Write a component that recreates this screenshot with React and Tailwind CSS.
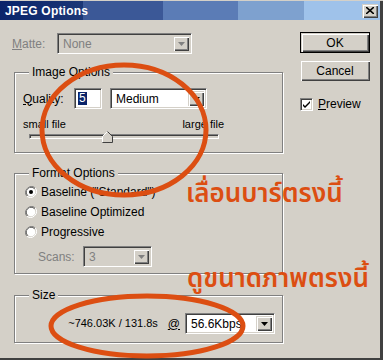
import React from "react";

const font = { fontFamily: '"Liberation Sans", Arial, sans-serif' };
const thai = { fontFamily: '"Noto Sans Thai", "Tahoma", "Loma", "Garuda", "DejaVu Sans", sans-serif' };

const sunken =
  "border border-t-[#808080] border-l-[#808080] border-b-white border-r-white shadow-[inset_1px_1px_0_#404040,inset_-1px_-1px_0_#d4d0c8]";
const raised =
  "bg-[#d4d0c8] shadow-[inset_1px_1px_0_#d4d0c8,inset_2px_2px_0_#fff,inset_-1px_-1px_0_#404040,inset_-2px_-2px_0_#808080]";

const Arrow = ({ disabled }) => (
  <div className={`w-[16px] h-full flex items-center justify-center ${raised}`}>
    <svg width="7" height="4" viewBox="0 0 7 4">
      <path d="M0 0h7L3.5 4z" fill={disabled ? "#808080" : "#000"} />
    </svg>
  </div>
);

const Select = ({ value, width, disabled }) => (
  <div
    className={`flex items-stretch h-[21px] p-[2px] ${sunken} ${disabled ? "bg-[#d4d0c8]" : "bg-white"}`}
    style={{ width }}
  >
    <div className={`flex-1 flex items-center pl-[3px] ${disabled ? "text-[#808080]" : "text-black"}`}>{value}</div>
    <Arrow disabled={disabled} />
  </div>
);

const Group = ({ title, h, children }) => (
  <div className={`relative border border-[#808080] shadow-[inset_1px_1px_0_#fff,1px_1px_0_#fff] ${h}`}>
    <span className="absolute left-[14px] top-[-8px] bg-[#d4d0c8] px-[3px] leading-[14px]">{title}</span>
    {children}
  </div>
);

const Radio = ({ checked, label }) => (
  <div className="flex items-center h-[20px] gap-[4px]">
    <svg width="12" height="12" viewBox="0 0 12 12">
      <path d="M10.2 1.8A6 6 0 0 0 1.8 10.2" stroke="#808080" fill="none" />
      <path d="M9.5 2.5A5 5 0 0 0 2.5 9.5" stroke="#404040" fill="none" />
      <path d="M1.8 10.2A6 6 0 0 0 10.2 1.8" stroke="#fff" fill="none" />
      <circle cx="6" cy="6" r="4.3" fill="#fff" />
      {checked && <circle cx="6" cy="6" r="2" fill="#000" />}
    </svg>
    <span>{label}</span>
  </div>
);

const Button = ({ label, def }) => (
  <div
    className={`w-[70px] h-[21px] flex items-center justify-center text-[12px] ${
      def ? "border border-black" : ""
    } ${raised}`}
  >
    {label}
  </div>
);

export default function App() {
  return (
    <div className="relative w-[383px] h-[360px] bg-[#d4d0c8] text-[12px] text-black overflow-hidden" style={font}>
      <div className="border-r-[3px] border-b-[3px] border-r-[#404040] border-b-[#404040] h-[360px]">
        {/* title bar */}
        <div className="mt-[1px] h-[19px] flex items-center justify-between pl-[5px] pr-[2px] bg-[linear-gradient(90deg,#0a246a_0,#1b3776_83px,#3b5897_83px,#3b5897_163px,#5b7cb6_163px,#5b7cb6_238px,#7ea1cf_238px,#7ea1cf_304px,#9fc2ea_304px)]">
          <span className="text-white font-bold text-[12px] tracking-[0.2px]">JPEG Options</span>
          <div className={`w-[16px] h-[14px] flex items-center justify-center ${raised}`}>
            <svg width="8" height="7" viewBox="0 0 8 7">
              <path d="M0 0L8 7M8 0L0 7" stroke="#000" strokeWidth="1.6" />
            </svg>
          </div>
        </div>

        <div className="flex">
          {/* left column */}
          <div className="w-[283px]">
            <div className="flex items-center mt-[13px] pl-[12px] gap-[12px]">
              <span className="text-[#808080] w-[33px]">
                <u>M</u>atte:
              </span>
              <Select value="None" width={135} disabled />
            </div>

            <div className="ml-[14px] mt-[18px]">
              <Group title="Image Options" h="h-[81px]">
                <div className="flex items-center mt-[15px] pl-[8px]">
                  <span className="w-[51px]">
                    <u>Q</u>uality:
                  </span>
                  <div className={`w-[28px] h-[21px] bg-white flex items-center pl-[3px] ${sunken}`}>
                    <span className="bg-[#0a246a] text-white leading-[13px] px-[1px]">5</span>
                  </div>
                  <div className="ml-[8px]">
                    <Select value="Medium" width={97} />
                  </div>
                </div>
                <div className="flex justify-between pl-[8px] pr-[58px] mt-[9px] text-[11px] leading-[13px]">
                  <span>small file</span>
                  <span>large file</span>
                </div>
                <div className="relative ml-[14px] mt-[3px] w-[190px] h-[5px] bg-[#d4d0c8] border border-t-[#808080] border-l-[#808080] border-b-white border-r-white shadow-[inset_1px_1px_0_#404040]">
                  <svg className="absolute left-[72px] top-[-4px]" width="11" height="12" viewBox="0 0 11 12">
                    <path d="M5.5 0.5L10.5 5.5V11.5H0.5V5.5Z" fill="#d4d0c8" />
                    <path d="M0.5 11V5.5L5.5 0.5" stroke="#fff" fill="none" />
                    <path d="M5.5 0.5L10.5 5.5V11.5H0.5" stroke="#404040" fill="none" />
                  </svg>
                </div>
              </Group>
            </div>

            <div className="ml-[14px] mt-[20px]">
              <Group title="Format Options" h="h-[101px]">
                <div className="pl-[10px] mt-[8px]">
                  <Radio checked label={'Baseline ("Standard")'} />
                  <Radio label="Baseline Optimized" />
                  <Radio label="Progressive" />
                </div>
                <div className="flex items-center mt-[4px] pl-[23px]">
                  <span className="text-[#808080] w-[45px]">Scans:</span>
                  <Select value="3" width={69} disabled />
                </div>
              </Group>
            </div>

            <div className="ml-[14px] mt-[21px]">
              <Group title="Size" h="h-[48px]">
                <div className="flex items-center justify-end mt-[17px] pr-[7px]">
                  <span className="text-[11px]">~746.03K / 131.8s</span>
                  <span className="underline ml-[10px] mr-[5px]">@</span>
                  <Select value="56.6Kbps" width={90} />
                </div>
              </Group>
            </div>
          </div>

          {/* right column */}
          <div className="ml-[17px] mt-[12px] flex flex-col">
            <Button label="OK" def />
            <div className="mt-[7px]">
              <Button label="Cancel" />
            </div>
            <div className="flex items-center mt-[14px] gap-[5px]">
              <div className={`w-[13px] h-[13px] bg-white flex items-center justify-center ${sunken}`}>
                <svg width="7" height="7" viewBox="0 0 7 7">
                  <path d="M0 3l2 2 5-5v2l-5 5-2-2z" fill="#000" />
                </svg>
              </div>
              <span>
                <u>P</u>review
              </span>
            </div>
          </div>
        </div>
      </div>

      {/* annotations */}
      <svg className="absolute left-0 top-0 pointer-events-none" width="383" height="360">
        <ellipse cx="124" cy="130" rx="82" ry="65" fill="none" stroke="#dc4e12" strokeWidth="5" />
        <ellipse cx="147" cy="326" rx="96" ry="30" fill="none" stroke="#dc4e12" strokeWidth="5" />
      </svg>
      <div className="absolute left-[186px] top-[174px] text-[#dc4e12] text-[26px] font-semibold leading-[40px]" style={thai}>
        เลื่อนบาร์ตรงนี้
      </div>
      <div className="absolute left-[187px] top-[259px] text-[#dc4e12] text-[26px] font-semibold leading-[40px]" style={thai}>
        ดูขนาดภาพตรงนี้
      </div>
    </div>
  );
}
